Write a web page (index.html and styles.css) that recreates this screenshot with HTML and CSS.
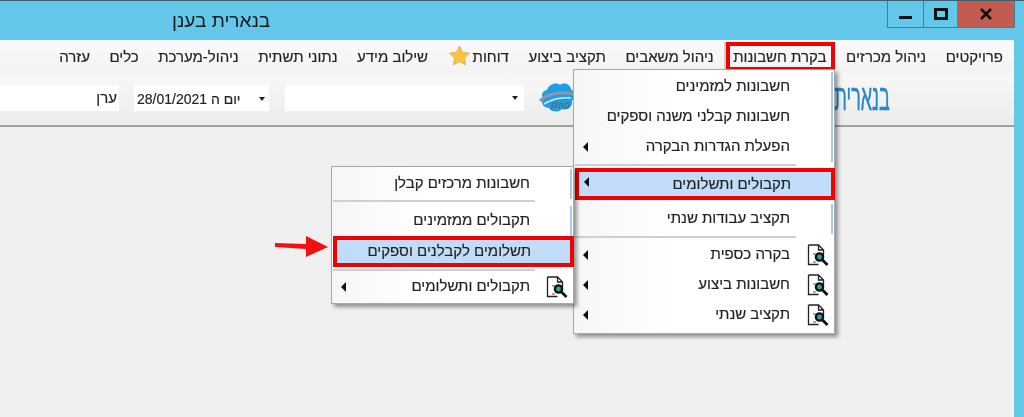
FILE: index.html
```html
<!DOCTYPE html>
<html lang="he">
<head>
    <meta charset="UTF-8">
    <meta name="viewport" content="width=device-width, initial-scale=1.0">
    <title>בנארית בענן</title>
    <link rel="stylesheet" href="styles.css">
</head>
<body>
    <svg class="icon-defs" width="0" height="0">
        <symbol id="report-icon" viewBox="0 0 22 22">
            <path d="M1.5 1h10l5 5v5M11.5 1v5h5M1.5 1v19.500h10" fill="#fff" stroke="#222" stroke-width="1.300"/>
            <circle cx="12.500" cy="13" r="3.600" fill="#2fa3a8" stroke="#111" stroke-width="2.400"/>
            <path d="M15.500 16l5 5" stroke="#111" stroke-width="2.800"/>
            <path d="M6 18h3M6 10h3" stroke="#555" stroke-width="1.200"/>
        </symbol>
    </svg>

    <div class="window">
        <div class="titlebar">
            <div class="window-buttons">
                <div class="win-btn win-min"><span class="min-glyph"></span></div>
                <div class="win-btn win-max"><span class="max-glyph"></span></div>
                <div class="win-btn win-close">
                    <svg width="14" height="12" viewBox="0 0 14 12"><path d="M2 1l10 10M12 1L2 11" stroke="#111" stroke-width="2.600"/></svg>
                </div>
            </div>
            <div class="title">בנארית בענן</div>
        </div>

        <div class="client">
            <div class="menubar">
                <span class="menu-item">פרויקטים</span>
                <span class="menu-item">ניהול מכרזים</span>
                <span class="menu-item menu-active">בקרת חשבונות</span>
                <span class="menu-item">ניהול משאבים</span>
                <span class="menu-item">תקציב ביצוע</span>
                <span class="menu-item menu-reports">דוחות
                    <svg class="star" width="23" height="22" viewBox="0 0 24 23"><path d="M12 1l3.200 6.600 7.300 1-5.300 5 1.300 7.200L12 17.400l-6.500 3.400 1.300-7.200-5.300-5 7.300-1z" fill="#f7c53c" stroke="#dfb261" stroke-width="1"/></svg>
                </span>
                <span class="menu-item">שילוב מידע</span>
                <span class="menu-item">נתוני תשתית</span>
                <span class="menu-item">ניהול-מערכת</span>
                <span class="menu-item">כלים</span>
                <span class="menu-item">עזרה</span>
            </div>

            <div class="toolbar">
                <div class="brand"><span class="brand-text">בנארית</span></div>
                <svg class="cloud" width="36" height="36" viewBox="0 0 36 36">
                    <path d="M8 10c2-6 9-8 13-5 4-3 10-1 11 4 4 3 4 9 1 12 1 6-5 10-10 8-4 4-11 3-13-1-5 0-9-5-6-10-2-3-1-7 4-8z" fill="#1c9fe6"/>
                    <path d="M1 21c6-7 20-10 33-7" fill="none" stroke="#8d9aa6" stroke-width="3"/>
                    <path d="M5 24c8-5 18-7 27-6" fill="none" stroke="#dfe6ea" stroke-width="1.500"/>
                    <path d="M12 30l2-7h4l-1 4h-3M20 29l1-6 3 1-1 2 2 3M27 28c-2-2-1-5 1-5s3 3 1 5z" fill="none" stroke="#5d6f7c" stroke-width="1.300"/>
                </svg>
                <div class="combo combo-wide"><span class="combo-arrow"></span></div>
                <div class="combo combo-date">
                    <span class="combo-arrow"></span>
                    <span class="date-text">יום ה 28/01/2021</span>
                </div>
                <div class="user-field">ערן</div>
            </div>

            <div class="workspace"></div>
        </div>

        <div class="popup popup-main">
            <div class="popup-row has-line"><span class="row-text">חשבונות למזמינים</span></div>
            <div class="popup-row has-line"><span class="row-text">חשבונות קבלני משנה וספקים</span></div>
            <div class="popup-row has-line has-sub"><span class="row-text">הפעלת הגדרות הבקרה</span></div>
            <div class="popup-sep"></div>
            <div class="popup-row row-selected has-sub"><span class="row-text">תקבולים ותשלומים</span></div>
            <div class="popup-row has-line"><span class="row-text">תקציב עבודות שנתי</span></div>
            <div class="popup-sep"></div>
            <div class="popup-row has-sub"><svg class="row-icon"><use href="#report-icon"/></svg><span class="row-text">בקרה כספית</span></div>
            <div class="popup-row has-sub"><svg class="row-icon"><use href="#report-icon"/></svg><span class="row-text">חשבונות ביצוע</span></div>
            <div class="popup-row has-sub"><svg class="row-icon"><use href="#report-icon"/></svg><span class="row-text">תקציב שנתי</span></div>
        </div>

        <div class="popup popup-sub">
            <div class="popup-row has-line"><span class="row-text">חשבונות מרכזים קבלן</span></div>
            <div class="popup-sep"></div>
            <div class="popup-row has-line"><span class="row-text">תקבולים ממזמינים</span></div>
            <div class="popup-row row-selected"><span class="row-text">תשלומים לקבלנים וספקים</span></div>
            <div class="popup-sep"></div>
            <div class="popup-row has-sub"><svg class="row-icon"><use href="#report-icon"/></svg><span class="row-text">תקבולים ותשלומים</span></div>
        </div>

        <svg class="pointer" width="54" height="22" viewBox="0 0 54 22">
            <path d="M0 7l31 1V0l22 11-22 10v-8L0 11z" fill="#f01010"/>
        </svg>
    </div>
</body>
</html>
```

FILE: styles.css
```css
* {
    box-sizing: border-box;
}
html, body {
    margin: 0;
    padding: 0;
    height: 100%;
    overflow: hidden;
}
body {
    font-family: "Liberation Sans", "DejaVu Sans", sans-serif;
    color: #222;
}
.icon-defs {
    position: absolute;
}
.window {
    position: relative;
    width: 1024px;
    height: 417px;
    background: #63c7ea;
    border-top: 1px solid #3f5f6e;
    overflow: hidden;
    filter: blur(0.35px);
}
.titlebar {
    height: 39px;
    display: flex;
    justify-content: space-between;
    flex-direction: row-reverse;
    padding-right: 9px;
}
.title {
    margin: 9px 0 0 172px;
    font-size: 19px;
    direction: rtl;
    color: #1a1a1a;
}
.window-buttons {
    display: flex;
    height: 27px;
    border: 1px solid #3f7f97;
    border-top: none;
}
.win-btn {
    display: flex;
    align-items: center;
    justify-content: center;
}
.win-min {
    width: 36px;
    border-right: 1px solid #3f7f97;
}
.win-max {
    width: 33px;
}
.win-close {
    width: 57px;
    background: #c25b50;
}
.min-glyph {
    width: 13px;
    height: 3px;
    background: #111;
    margin-top: 6px;
}
.max-glyph {
    width: 14px;
    height: 12px;
    border: 3px solid #111;
}
.client {
    width: 1014px;
    height: 377px;
    background: #f0f0f0;
}
.menubar {
    height: 33px;
    display: flex;
    direction: rtl;
    align-items: center;
    gap: 19.5px;
    padding: 0 11px 1px 0;
    background: linear-gradient(#fafafa, #f3f3f3);
    font-size: 15px;
    -webkit-text-stroke: 0.2px #333;
}
.menu-item {
    white-space: nowrap;
}
.menu-active {
    position: relative;
}
.menu-active::after {
    content: "";
    position: absolute;
    inset: -6px -8px -6px -7px;
    border: 4px solid #f00000;
    box-shadow: -2px 0 0 #cfcfcf;
}
.menu-reports {
    display: flex;
    align-items: center;
    gap: 2px;
}
.toolbar {
    height: 54px;
    display: flex;
    direction: rtl;
    align-items: center;
    background: linear-gradient(#f8f8f8, #ececec);
    border-bottom: 2px solid #a0a0a0;
    padding: 0 124px 2px 0;
}
.brand {
    width: 315px;
    height: 36px;
}
.brand-text {
    display: inline-block;
    font-size: 36px;
    line-height: 36px;
    color: #2b88c8;
    transform: scaleX(0.5);
    transform-origin: right center;
    -webkit-text-stroke: 0.5px #2b88c8;
}
.combo {
    height: 26px;
    background: #fff;
    display: flex;
    align-items: center;
}
.combo-wide {
    width: 239px;
    margin-right: 15px;
    padding-right: 6px;
}
.combo-date {
    width: 135px;
    margin-right: 16px;
    font-size: 14px;
    justify-content: space-between;
    padding: 2px 4px 0 3px;
    -webkit-text-stroke: 0.2px #333;
}
.combo-arrow {
    display: inline-block;
    border-top: 4px solid #222;
    border-left: 3px solid transparent;
    border-right: 3px solid transparent;
}
.date-text {
    white-space: nowrap;
}
.user-field {
    flex: 1;
    height: 26px;
    margin-right: 15px;
    padding-right: 2px;
    background: #fff;
    font-size: 15px;
    line-height: 26px;
    -webkit-text-stroke: 0.2px #333;
}
.workspace {
    height: 290px;
}
.popup {
    position: absolute;
    direction: rtl;
    border: 1px solid #a9a9a9;
    box-shadow: 3px 3px 4px rgba(0, 0, 0, 0.4);
    font-size: 15px;
    padding-top: 2px;
    background: linear-gradient(270deg, #fff 60%, #f6f6f6);
    -webkit-text-stroke: 0.2px #333;
}
.popup-main {
    left: 573px;
    top: 68px;
    width: 262px;
    height: 265px;
}
.popup-sub {
    left: 331px;
    top: 165px;
    width: 243px;
    height: 138px;
}
.popup-row {
    position: relative;
    height: 30px;
    display: flex;
    align-items: center;
    padding: 0 44px 3px 0;
    white-space: nowrap;
}
.popup-sub .popup-row {
    padding-right: 43px;
}
.has-line::before {
    content: "";
    position: absolute;
    right: 1px;
    top: 0;
    bottom: 0;
    width: 2px;
    background: #a8c8ee;
}
.row-icon {
    position: absolute;
    right: 5px;
    top: 4px;
    width: 22px;
    height: 22px;
}
.has-sub::after {
    content: "";
    position: absolute;
    left: 9px;
    top: 10px;
    border-top: 5px solid transparent;
    border-bottom: 5px solid transparent;
    border-right: 5px solid #111;
}
.popup-sep {
    height: 2px;
    margin: 2px 38px 2px 1px;
    background: #cfcfcf;
}
.popup-row.row-selected {
    height: 32px;
    margin: 1px -1px 4px 1px;
    background: #c0dcf8;
    border: 4px solid #f00000;
    padding: 0 40px 2px 0;
}
.row-selected.has-sub::after {
    left: 5px;
    top: 5px;
}
.popup-sub .popup-sep {
    margin: 1px 38px 4px 1px;
}
.popup-sub .popup-row.row-selected {
    height: 31px;
    margin: 0 -1px 0 1px;
    padding-right: 39px;
}
.popup-sub .row-selected + .popup-sep {
    margin: 2px 38px 1px 1px;
}
.pointer {
    position: absolute;
    left: 275px;
    top: 235px;
}
```
